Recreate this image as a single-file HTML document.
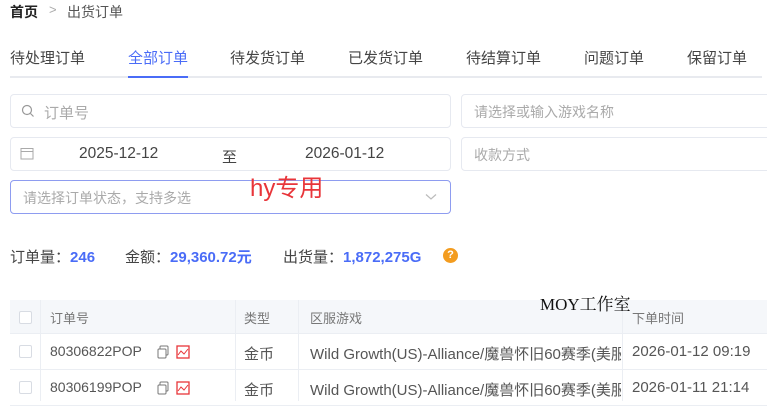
<!DOCTYPE html>
<html><head><meta charset="utf-8"><style>
*{margin:0;padding:0;box-sizing:border-box}
body{width:767px;height:401px;overflow:hidden;background:#fff;font-family:"Liberation Sans","Noto Sans CJK SC",sans-serif;color:#555;position:relative;font-size:14px}
.a{position:absolute;white-space:nowrap}
.box{position:absolute;border:1px solid #e6e9f0;border-radius:4px;background:#fff}
.ph{color:#aaa}
.tab{position:absolute;top:47px;font-size:15px;color:#444}
.th{position:absolute;top:300px;left:10px;width:757px;height:34px;background:#f5f7fa;border-bottom:1px solid #ebeef3}
.row{position:absolute;left:10px;width:757px;height:36px;border-bottom:1px solid #ebeef3}
.cb{position:absolute;left:9px;width:13px;height:13px;border:1px solid #d8dce3;border-radius:2px;background:#fff}
.vl{position:absolute;top:300px;height:101px;width:1px;background:#ebeef3}
.t{font-size:15px;color:#555}
</style></head><body>
<div class="a" style="left:10px;top:2px;font-size:14px;color:#222;font-weight:bold">首页</div>
<div class="a" style="left:49px;top:2px;font-size:13px;color:#aaa">&gt;</div>
<div class="a" style="left:67px;top:2px;font-size:14px;color:#555">出货订单</div>

<div class="tab" style="left:10px">待处理订单</div>
<div class="tab" style="left:128px;color:#4a6cf7">全部订单</div>
<div class="tab" style="left:230px">待发货订单</div>
<div class="tab" style="left:348px">已发货订单</div>
<div class="tab" style="left:466px">待结算订单</div>
<div class="tab" style="left:584px">问题订单</div>
<div class="tab" style="left:687px">保留订单</div>
<div class="a" style="left:10px;top:76px;width:752px;height:2px;background:#e8eaef"></div>
<div class="a" style="left:128px;top:76px;width:60px;height:2px;background:#4a6cf7"></div>

<div class="box" style="left:10px;top:94px;width:441px;height:34px"></div>
<svg class="a" style="left:21px;top:104px" width="14" height="14" viewBox="0 0 14 14"><circle cx="6" cy="6" r="4.5" fill="none" stroke="#999" stroke-width="1.2"/><path d="M9.5 9.5L12.5 12.5" stroke="#999" stroke-width="1.2"/></svg>
<div class="a ph" style="left:44px;top:102px;font-size:15px">订单号</div>
<div class="box" style="left:461px;top:94px;width:320px;height:34px"></div>
<div class="a ph" style="left:474px;top:102px;font-size:14px">请选择或输入游戏名称</div>

<div class="box" style="left:10px;top:137px;width:441px;height:34px"></div>
<svg class="a" style="left:20px;top:147px" width="14" height="13" viewBox="0 0 14 13"><rect x="1" y="1.5" width="12" height="10.5" fill="none" stroke="#aaa"/><path d="M1 4.5H13" stroke="#aaa"/></svg>
<div class="a" style="left:79px;top:145px;font-size:15.5px;color:#444">2025-12-12</div>
<div class="a" style="left:222px;top:146px;font-size:15px;color:#444">至</div>
<div class="a" style="left:305px;top:145px;font-size:15.5px;color:#444">2026-01-12</div>
<div class="box" style="left:461px;top:137px;width:320px;height:34px"></div>
<div class="a ph" style="left:474px;top:145px;font-size:14px">收款方式</div>

<div class="box" style="left:10px;top:180px;width:441px;height:34px;border:1.5px solid #8e9cf0"></div>
<div class="a ph" style="left:23px;top:188px;font-size:14px">请选择订单状态，支持多选</div>
<svg class="a" style="left:425px;top:193px" width="12" height="8" viewBox="0 0 12 8"><path d="M1 1.5L6 6L11 1.5" fill="none" stroke="#bbb" stroke-width="1.2"/></svg>
<div class="a" style="left:250px;top:168px;font-size:24px;color:#e8353a">hy专用</div>

<div class="a" style="left:10px;top:246px;font-size:15px;color:#444">订单量：<span style="color:#4a6cf7;font-weight:600">246</span></div>
<div class="a" style="left:125px;top:246px;font-size:15px;color:#444">金额：<span style="color:#4a6cf7;font-weight:600">29,360.72元</span></div>
<div class="a" style="left:283px;top:246px;font-size:15px;color:#444">出货量：<span style="color:#4a6cf7;font-weight:600">1,872,275G</span></div>
<div class="a" style="left:443px;top:248px;width:15px;height:15px;border-radius:50%;background:#f39c1f;color:#fff;font-size:11px;font-weight:bold;text-align:center;line-height:15px">?</div>

<div class="th"><div class="cb" style="top:11px"></div></div>
<div class="row" style="top:334px"><div class="cb" style="top:11px"></div></div>
<div class="row" style="top:370px"><div class="cb" style="top:11px"></div></div>
<div class="vl" style="left:40px"></div>
<div class="vl" style="left:235px"></div>
<div class="vl" style="left:298px"></div>
<div class="vl" style="left:622px"></div>
<div class="a" style="left:50px;top:308px;font-size:13px;color:#777">订单号</div>
<div class="a" style="left:244px;top:308px;font-size:13px;color:#777">类型</div>
<div class="a" style="left:310px;top:308px;font-size:13px;color:#777">区服游戏</div>
<div class="a" style="left:632px;top:308px;font-size:13px;color:#777">下单时间</div>
<div class="a" style="left:540px;top:290px;font-size:17px;color:#111;font-family:'Liberation Serif','Noto Serif CJK SC',serif">MOY工作室</div>

<div class="a t" style="left:50px;top:343px;font-size:14px">80306822POP</div>
<div class="a t" style="left:50px;top:379px;font-size:14px">80306199POP</div>
<svg class="a" style="left:157px;top:345px" width="34" height="14" viewBox="0 0 34 14"><rect x="3" y="1" width="8" height="9" rx="1" fill="none" stroke="#777"/><rect x="1" y="4" width="8" height="9" rx="1" fill="#fff" stroke="#777"/><rect x="20" y="1" width="12" height="12" fill="none" stroke="#e8353a" stroke-width="1.3"/><path d="M21 10L24 6L27 9L31 4" fill="none" stroke="#e8353a"/></svg>
<svg class="a" style="left:157px;top:381px" width="34" height="14" viewBox="0 0 34 14"><rect x="3" y="1" width="8" height="9" rx="1" fill="none" stroke="#777"/><rect x="1" y="4" width="8" height="9" rx="1" fill="#fff" stroke="#777"/><rect x="20" y="1" width="12" height="12" fill="none" stroke="#e8353a" stroke-width="1.3"/><path d="M21 10L24 6L27 9L31 4" fill="none" stroke="#e8353a"/></svg>
<div class="a t" style="left:244px;top:343px">金币</div>
<div class="a t" style="left:244px;top:379px">金币</div>
<div class="a t" style="left:310px;top:343px;width:311px;overflow:hidden">Wild Growth(US)-Alliance/魔兽怀旧60赛季(美服)</div>
<div class="a t" style="left:310px;top:379px;width:311px;overflow:hidden">Wild Growth(US)-Alliance/魔兽怀旧60赛季(美服)</div>
<div class="a t" style="left:632px;top:343px">2026-01-12 09:19</div>
<div class="a t" style="left:632px;top:379px">2026-01-11 21:14</div>
</body></html>
